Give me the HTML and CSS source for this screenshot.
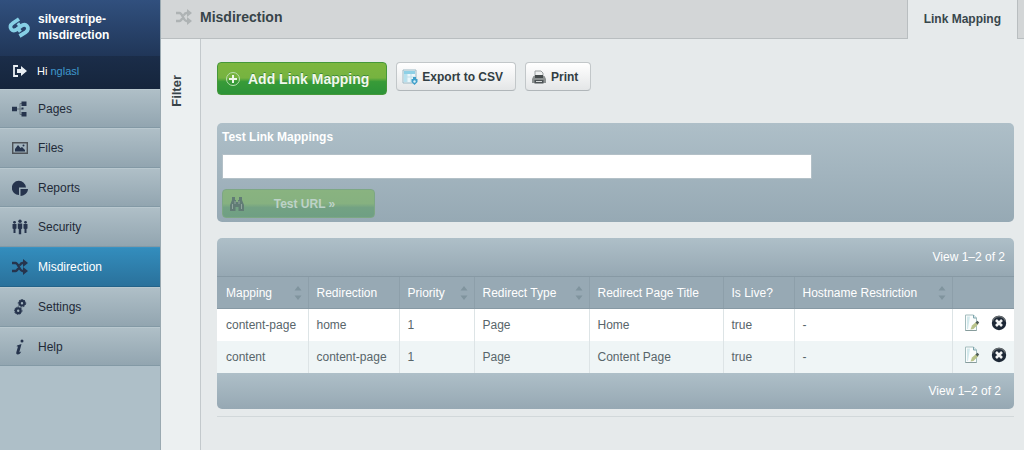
FILE: index.html
```html
<!DOCTYPE html>
<html lang="en">
<head>
<meta charset="utf-8">
<title>Misdirection - silverstripe-misdirection</title>
<link rel="stylesheet" href="styles.css">
</head>
<body>
<svg class="sprites" aria-hidden="true">
  <symbol id="shuffle" viewBox="0 0 16 16">
    <path d="M0 4h3.500c3 0 4 8 7 8H12M0 12h3.500c1.200 0 2-1.200 2.700-2.800M7.700 6.500C8.400 5 9.200 4 10.500 4H12" fill="none" stroke="currentColor" stroke-width="2.300"/>
    <path d="M11 .0 16 4l-5 4zM11 8l5 4-5 4z" fill="currentColor"/>
  </symbol>
  <symbol id="edit" viewBox="0 0 16 18">
    <path d="M1.500 1h8l3 3v12.500h-11z" fill="#fbfdfd" stroke="#a3bcbd"/>
    <path d="M3 2.500h3L4 15H3z" fill="#d3e9ec"/>
    <path d="M9.500 1v3h3" fill="#d9e9eb" stroke="#7da5ad"/>
    <path d="M6.500 15.500l1.500-4 4-3.500 2.500 2-5 5z" fill="#b9c38a"/>
    <path d="M11.500 8.500l2-1.700 1.700 1.700-1.700 2z" fill="#4e5b57"/>
    <path d="M1.500 16.500h11" stroke="#879c9c"/>
  </symbol>
  <symbol id="remove" viewBox="0 0 16 16">
    <circle cx="8" cy="8" r="7.200" fill="#1d2836"/>
    <path d="M1.500 6a7 7 0 0 1 13 0" fill="none" stroke="#666c70" stroke-width="1.500"/>
    <path d="M5 5l6 6M11 5l-6 6" stroke="#f2f3f3" stroke-width="2.600"/>
  </symbol>
  <symbol id="sort" viewBox="0 0 8 14">
    <path d="M4 0l3.500 4.500h-7zM4 14L.5 9.500h7z" fill="#80949e"/>
  </symbol>
</svg>
<div class="app">
  <aside class="sidebar">
    <header class="brand">
      <svg class="logo" viewBox="0 0 22 20" aria-hidden="true">
        <g fill="none" stroke="#86cfe5" stroke-width="3.800">
          <path d="M11 2 5 6C2 8 1.800 10.500 3.300 12.200S7 13.800 9 12.300L12.500 9.500c2.500-2 5-2.200 6.500-.5s1.500 4.500-1.500 6.400L11.500 19"/>
        </g>
        <path d="M9.500 8.500l2.600-2M10 14.500l2.800-2.200" stroke="#86cfe5" stroke-width="3.400" fill="none"/>
      </svg>
      <span>silverstripe-<br>misdirection</span>
    </header>
    <div class="account">
      <svg class="icon" viewBox="0 0 16 16" aria-hidden="true">
        <path d="M6 3H2v10h4" fill="none" stroke="#e9eef3" stroke-width="1.800"/>
        <path d="M5 6h4V3l6 5-6 5v-3H5z" fill="#e9eef3"/>
      </svg>
      <span>Hi <a href="#profile">nglasl</a></span>
    </div>
    <nav>
      <ul class="menu">
        <li><a href="#pages"><svg class="icon" viewBox="0 0 16 16" aria-hidden="true"><path d="M4 8h4M12 2.500H8v11h4M8 8h2" fill="none" stroke="#66757e"/><path d="M0 5.800h5v4.500H0zM9.500.5h5v4.500h-5zM9.500 11h5v4.500h-5zM9.500 6.500h2v2h-2z"/></svg>Pages</a></li>
        <li><a href="#files"><svg class="icon" viewBox="0 0 16 16" aria-hidden="true"><path d="M.7 2.700h14.600v10.600H.7z" fill="none" stroke="#4e5358" stroke-width="1.400"/><path d="M3 11.500V9l3-4 2.500 3 1.500-1 3 3v1.500z"/><circle cx="11.500" cy="5.500" r="1"/></svg>Files</a></li>
        <li><a href="#reports"><svg class="icon" viewBox="0 0 16 16" aria-hidden="true"><path d="M7 7.500V15A7.100 7.100 0 1 1 14 7.500z"/><path d="M8.500 9H16c-.3 4-3 6.500-7.500 7z"/></svg>Reports</a></li>
        <li><a href="#security"><svg class="icon" viewBox="0 0 16 16" aria-hidden="true"><circle cx="2.500" cy="3.300" r="1.400"/><circle cx="8" cy="2.300" r="1.700"/><circle cx="13.500" cy="3.300" r="1.400"/><path d="M.5 5h4v4.500l-1 .5v4h-2v-4l-1-.5zM5.800 4.500h4.400v5l-1 .8v5H6.800v-5l-1-.8zM11.500 5h4v4.500l-1 .5v4h-2v-4l-1-.5z"/></svg>Security</a></li>
        <li class="current"><a href="#misdirection" aria-current="page"><svg class="icon" aria-hidden="true"><use href="#shuffle"/></svg>Misdirection</a></li>
        <li><a href="#settings"><svg class="icon" viewBox="0 0 16 16" aria-hidden="true"><g fill="none" stroke="currentColor"><circle cx="10" cy="4.200" r="2.300" stroke-width="2.200"/><circle cx="10" cy="4.200" r="3.700" stroke-width="1" stroke-dasharray="1.700 1"/><circle cx="6.200" cy="11.700" r="2.300" stroke-width="2.200"/><circle cx="6.200" cy="11.700" r="3.700" stroke-width="1" stroke-dasharray="1.700 1"/></g></svg>Settings</a></li>
        <li><a href="#help"><svg class="icon" viewBox="0 0 16 16" aria-hidden="true"><circle cx="10" cy="2" r="1.500"/><path d="M5 6.500 9.500 5 7.500 12.500c-.2 1 .5.800 1.700-.3-.6 2.300-2 3.300-3.400 3.300-1.500 0-1.800-1-1.400-2.500L6 7.500H4.700z"/></svg>Help</a></li>
      </ul>
    </nav>
  </aside>
  <main class="content">
    <header class="topbar">
      <div class="heading">
        <svg class="icon" aria-hidden="true"><use href="#shuffle"/></svg>
        <h1>Misdirection</h1>
      </div>
      <a class="tab" href="#link-mapping">Link Mapping</a>
    </header>
    <div class="body">
      <aside class="filter"><button type="button">Filter</button></aside>
      <div class="panel">
        <div class="actions">
          <button type="button" class="btn btn-add">
            <svg class="icon" viewBox="0 0 16 16" aria-hidden="true"><circle cx="8" cy="8" r="6.500" fill="none" stroke="#b9dfb0"/><path d="M8 4v8M4 8h8" stroke="#eef7ea" stroke-width="2"/></svg>
            Add Link Mapping
          </button>
          <button type="button" class="btn btn-plain">
            <svg class="icon" viewBox="0 0 16 16" aria-hidden="true"><path d="M1 1h13v13H1z" fill="#e9f6fb" stroke="#9db9c4"/><path d="M2 2h11v3H2z" fill="#8ed0e6"/><path d="M2 5h3v8H2z" fill="#b5e1ef"/><path d="M5 5v8M5 8h8M9 5v8" stroke="#c0dfe9"/><path d="M9.500 10h1.500V8h3v2h1.500v3l-3 3-3-3z" fill="#3f9fca"/><circle cx="12.500" cy="12.500" r="1.200" fill="#d9f0f8"/></svg>
            Export to CSV
          </button>
          <button type="button" class="btn btn-plain">
            <svg class="icon" viewBox="0 0 16 16" aria-hidden="true"><path d="M4 8V2h6l2 2v4z" fill="#eef0f0" stroke="#9ba0a1"/><path d="M2.500 7h11L15 10v4H1v-4z" fill="#8c9191"/><path d="M4 6h8v3H4z" fill="#454b4c"/><path d="M3.500 11h9v3.500h-9z" fill="#4d5355"/><path d="M5 12.500h6" stroke="#d7dada"/></svg>
            Print
          </button>
        </div>
        <form class="tester">
          <label for="test-url">Test Link Mappings</label>
          <input id="test-url" type="text">
          <button type="button" class="btn btn-test" disabled>
            <svg class="icon" viewBox="0 0 16 16" aria-hidden="true"><path d="M3 1h3v3h1v2h2V4h1V1h3v3l2 5v6H9.500v-4h-3v4H1V9l2-5z" fill="#617c75"/><path d="M3.500 8v5M12.500 8v5M6 5v3M10 5v3" stroke="#92a59f"/></svg>
            <span>Test URL »</span>
          </button>
        </form>
        <section class="grid">
          <div class="grid-top">View 1–2 of 2</div>
          <table>
            <colgroup><col class="c-map"><col class="c-redir"><col class="c-priority"><col class="c-type"><col class="c-title"><col class="c-live"><col class="c-host"><col class="c-actions"></colgroup>
            <thead>
              <tr>
                <th><div>Mapping<svg aria-hidden="true"><use href="#sort"/></svg></div></th>
                <th><div>Redirection</div></th>
                <th><div>Priority<svg aria-hidden="true"><use href="#sort"/></svg></div></th>
                <th><div>Redirect Type<svg aria-hidden="true"><use href="#sort"/></svg></div></th>
                <th><div>Redirect Page Title</div></th>
                <th><div>Is Live?</div></th>
                <th><div>Hostname Restriction<svg aria-hidden="true"><use href="#sort"/></svg></div></th>
                <th></th>
              </tr>
            </thead>
            <tbody>
              <tr>
                <td>content-page</td><td>home</td><td>1</td><td>Page</td><td>Home</td><td>true</td><td>-</td>
                <td><div class="row-actions"><a href="#edit-1" aria-label="Edit"><svg class="edit"><use href="#edit"/></svg></a><button type="button" aria-label="Delete"><svg class="remove"><use href="#remove"/></svg></button></div></td>
              </tr>
              <tr>
                <td>content</td><td>content-page</td><td>1</td><td>Page</td><td>Content Page</td><td>true</td><td>-</td>
                <td><div class="row-actions"><a href="#edit-2" aria-label="Edit"><svg class="edit"><use href="#edit"/></svg></a><button type="button" aria-label="Delete"><svg class="remove"><use href="#remove"/></svg></button></div></td>
              </tr>
            </tbody>
          </table>
          <div class="grid-bottom">View 1–2 of 2</div>
        </section>
        <hr>
      </div>
    </div>
  </main>
</div>
</body>
</html>
```
FILE: styles.css
```css
* { box-sizing: border-box; }
body {
  margin: 0;
  font: 12px/16px "Liberation Sans", Arial, sans-serif;
  color: #4c5a60;
  background: #e6eaeb;
}
button, input { font: inherit; }
a { text-decoration: none; }
.sprites { position: absolute; width: 0; height: 0; }
.icon { flex: none; width: 16px; height: 16px; fill: currentColor; }

.app { display: flex; min-height: 100vh; }

.sidebar {
  flex: none;
  width: 161px;
  background: #aebfc8;
  border-right: 1px solid #9aa9b1;
}
.brand {
  display: flex;
  align-items: center;
  gap: 8px;
  height: 56px;
  padding: 0 8px 2px;
  color: #fff;
  font-weight: bold;
  background: linear-gradient(#31507e, #203658);
}
.logo { width: 22px; height: 20px; overflow: visible; }
.account {
  display: flex;
  align-items: center;
  gap: 9px;
  height: 33px;
  padding: 0 12px 4px;
  font-size: 11px;
  color: #fff;
  background: linear-gradient(#1b2d49, #15253c);
}
.account a { color: #3f98cd; }
.menu { margin: 0; padding: 0; list-style: none; }
.menu a {
  display: flex;
  align-items: center;
  gap: 10px;
  height: 40px;
  padding: 0 12px;
  color: #1f2a38;
  background: linear-gradient(#afbfc7, #92a5b0);
  border-top: 1px solid #b9c8cf;
  border-bottom: 1px solid #8399a5;
}
.menu li:nth-child(odd) a { height: 39px; }
.menu .icon { color: #26344d; }
.menu .current a {
  color: #fff;
  background: linear-gradient(#338dbd, #2a719b);
  border-top-color: #3a92c2;
  border-bottom-color: #246389;
}
.menu li.current a { height: 40px; }

.content { flex: 1; min-width: 0; display: flex; flex-direction: column; }
.topbar {
  display: flex;
  justify-content: space-between;
  height: 39px;
  padding: 0 6px 0 15px;
  background: #d3d6d7;
  box-shadow: inset 0 -1px #b9bec0;
}
.heading { display: flex; align-items: center; gap: 8px; padding-bottom: 5px; }
.heading .icon { color: #aeb3b4; }
.heading h1 { margin: 0; font-size: 14px; line-height: 16px; color: #374449; }
.tab {
  padding: 11px 16px;
  font-weight: bold;
  color: #38464b;
  background: #e6eaeb;
  border: solid #b9bec0;
  border-width: 0 1px;
}
.body { flex: 1; display: flex; }
.filter { flex: none; width: 40px; background: #ecf0f1; border-right: 1px solid #c3c9cc; }
.filter button {
  margin: 36px 8px 0;
  padding: 0;
  border: 0;
  background: none;
  font-size: 13px;
  line-height: 16px;
  font-weight: bold;
  color: #384348;
  writing-mode: vertical-rl;
  rotate: 180deg;
}
.panel { flex: 1; min-width: 0; padding: 23px 10px 0 16px; }

.actions { display: flex; align-items: flex-start; gap: 9px; margin-bottom: 28px; }
.btn {
  display: flex;
  align-items: center;
  gap: 4px;
  font-weight: bold;
  border-radius: 4px;
}
.btn-add {
  gap: 7px;
  height: 33px;
  padding: 0 17px 0 7px;
  font-size: 14px;
  color: #f1f8ec;
  background: linear-gradient(#7db63f 0%, #76b340 48%, #389b38 60%, #2c9338 100%);
  border: 1px solid #45983a;
  text-shadow: 0 -1px #3e8a38;
}
.btn-plain {
  height: 29px;
  padding: 0 12px 0 5px;
  color: #323e43;
  background: linear-gradient(#fff, #e4e6e7);
  border: 1px solid #c2c7c9;
  border-bottom-color: #b0b6b9;
}

.tester {
  height: 99px;
  padding: 6px 5px 0;
  border-radius: 5px;
  background: linear-gradient(#aebfc8, #96a9b4);
}
.tester label { display: block; font-weight: bold; color: #fff; }
.tester input {
  display: block;
  width: 75%;
  height: 25px;
  margin: 9px 0 10px;
  padding: 0 8px;
  border: 1px solid #b3c0c7;
  background: #fff;
}
.btn-test {
  width: 153px;
  height: 29px;
  padding: 0 6px;
  color: #bdd2c8;
  background: linear-gradient(#89b380 0%, #86b180 50%, #73a283 65%, #6f9f84 100%);
  border: 1px solid #7da784;
}
.btn-test span { flex: 1; padding-right: 8px; text-align: center; }

.grid { margin-top: 16px; border-radius: 5px; overflow: hidden; color: #fff; }
.grid-top, .grid-bottom {
  text-align: right;
  line-height: 38px;
  padding: 0 9px;
  background: linear-gradient(#aebfc8, #96a8b3);
}
.grid-bottom { line-height: 36px; padding-right: 13px; }
table { width: 100%; table-layout: fixed; border-collapse: collapse; }
.c-map { width: 91px; }
.c-redir { width: 91px; }
.c-priority { width: 75px; }
.c-type { width: 115px; }
.c-title { width: 134px; }
.c-live { width: 71px; }
.c-host { width: 158px; }
.c-actions { width: 62px; }
th, td { height: 32px; padding: 0 4px 0 8px; text-align: left; white-space: nowrap; }
th {
  font-weight: normal;
  background: #97a9b4;
  border: 1px solid #8799a4;
  border-left-color: #8d9faa;
  border-width: 1px 0 1px 1px;
}
th:first-child, td:first-child { border-left: 0; padding-left: 9px; }
th div { display: flex; align-items: center; justify-content: space-between; }
th svg { width: 8px; height: 14px; margin-right: 2px; }
td { color: #58656a; background: #fff; border-left: 1px solid #dde4e6; }
tr:nth-child(even) td { background: #eff5f6; }
.row-actions { display: flex; align-items: center; gap: 11px; padding: 0 3px 4px; }
.row-actions a, .row-actions button { display: flex; padding: 0; border: 0; background: none; }
.edit { width: 16px; height: 18px; }
.remove { width: 16px; height: 16px; }
hr { margin: 7px 0 0; border: 0; border-top: 1px solid #d2d8da; }
```
